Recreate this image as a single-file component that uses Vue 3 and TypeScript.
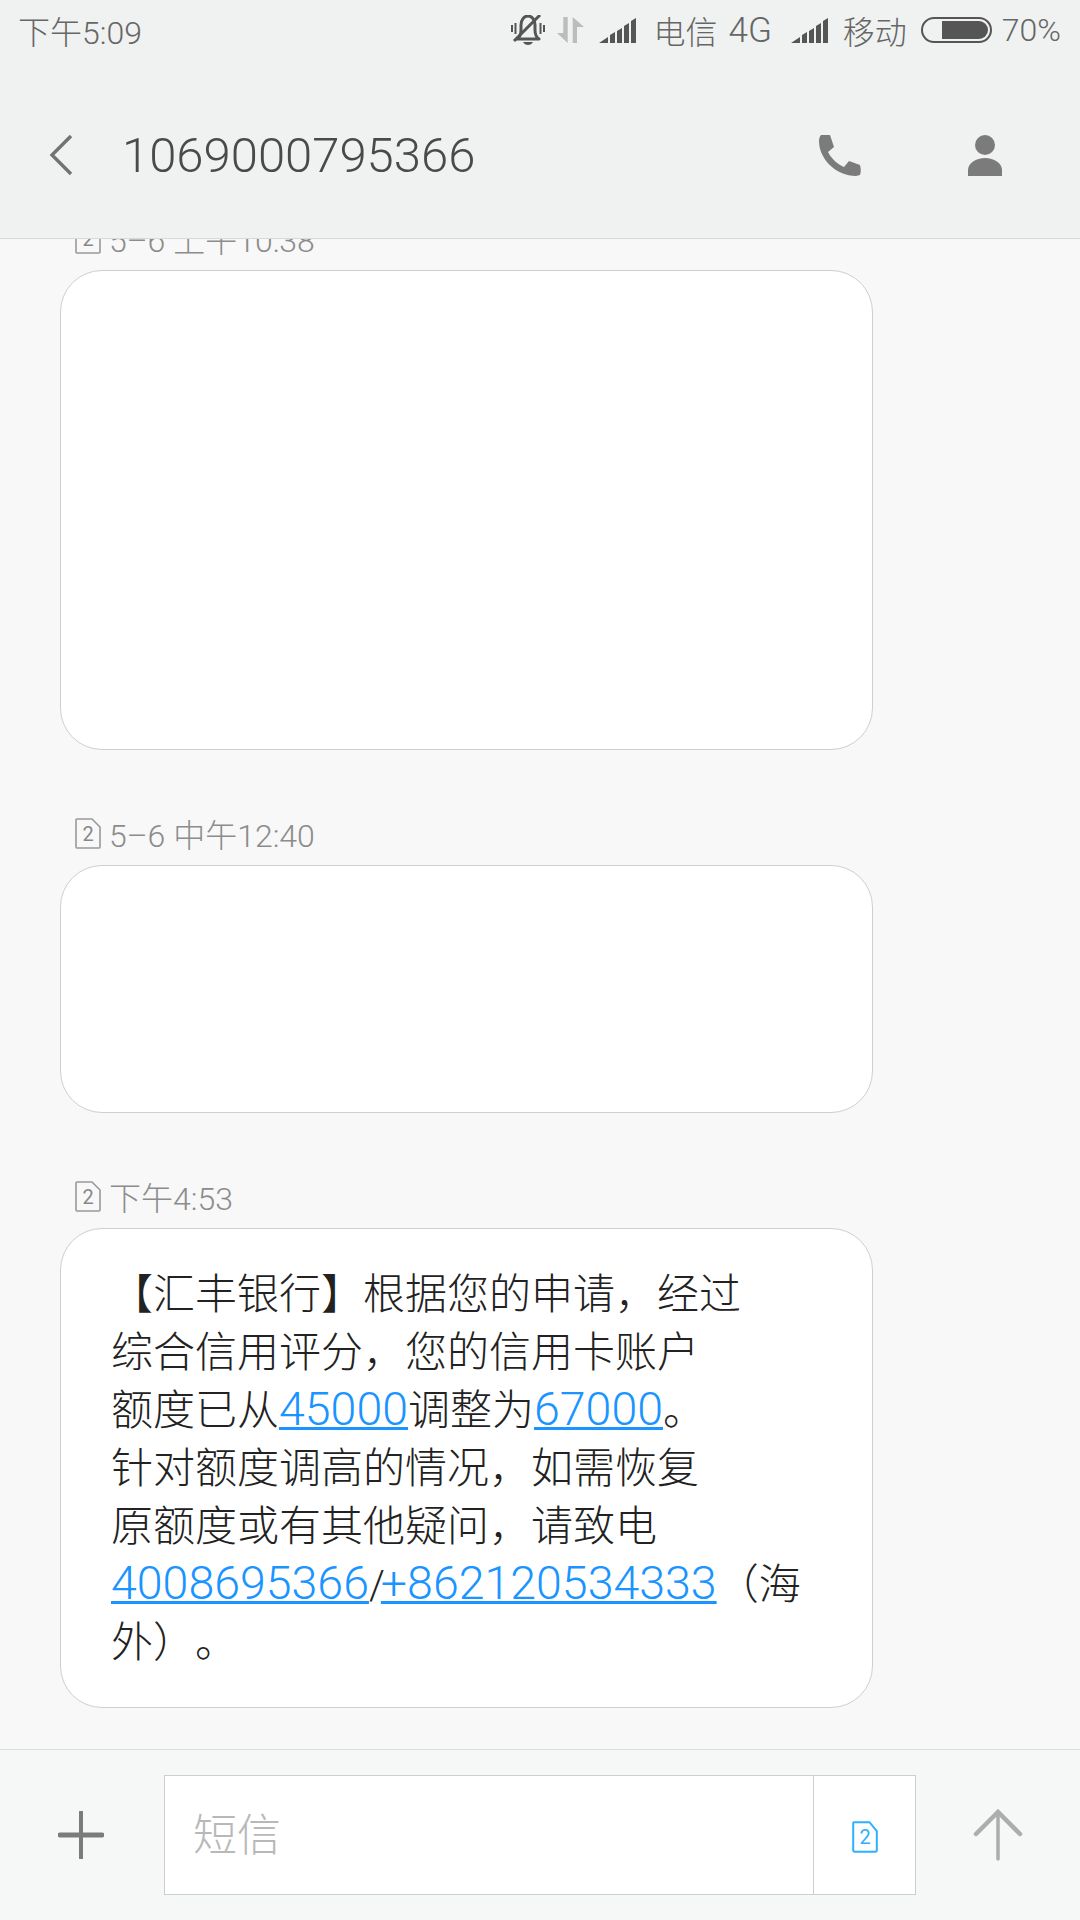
<template>
  <div class="screen">
    <header class="top">
      <div class="status">
        <span class="time">下午5:09</span>
        <div class="status-right">
          <svg class="ic-mute" width="34" height="31" viewBox="0 0 34 31">
            <path d="M6 24c3-2 4-5 4-9v-5c0-5 3-9 7-9s7 4 7 9v5c0 4 1 7 4 9z" fill="none" stroke="#555" stroke-width="3" stroke-linejoin="round" />
            <path d="M12 27h10c-1 2-3 3-5 3s-4-1-5-3z" fill="#555" />
            <path d="M1 10v7M4.500 8v11M29.500 8v11M33 10v7" stroke="#555" stroke-width="2" />
            <path d="M3 26 29 0" stroke="#555" stroke-width="3" />
          </svg>
          <svg class="ic-data" width="27" height="26" viewBox="0 0 27 26">
            <path d="M6.300 0h4.400v26L0 16h6.300z" fill="#bcbcbc" />
            <path d="M15.700 0 27 10h-7v16h-4.300z" fill="#bcbcbc" />
          </svg>
          <svg class="ic-sig first" width="37" height="25" viewBox="0 0 37 25">
            <path d="M0 25l9-6v6zM11 25v-8l5-3v11zM18 25V13l5-3v15zM25 25V8l5-3v20zM32 25V3l5-3v25z" fill="#555" />
          </svg>
          <span class="carrier first">电信</span>
          <span class="net">4G</span>
          <svg class="ic-sig" width="37" height="25" viewBox="0 0 37 25">
            <path d="M0 25l9-6v6zM11 25v-8l5-3v11zM18 25V13l5-3v15zM25 25V8l5-3v20zM32 25V3l5-3v25z" fill="#555" />
          </svg>
          <span class="carrier">移动</span>
          <div class="battery"><i></i></div>
          <span class="pct">70%</span>
        </div>
      </div>
      <div class="title-row">
        <svg class="back" width="24" height="42" viewBox="0 0 24 42">
          <path d="M22 2 3 21l19 19" fill="none" stroke="#737373" stroke-width="3.4" />
        </svg>
        <h1 class="title">1069000795366</h1>
        <svg class="phone" width="42" height="41" viewBox="0 0 42 41">
          <path d="M2 0h9l4 12-6 5c3 6 9 12 16 15l5-6 11 4c1 4 1 7 0 10l-4 1C17 41 0 24 0 6c0-3 1-5 2-6z" fill="#7b7b7b" />
        </svg>
        <svg class="person" width="34" height="41" viewBox="0 0 34 41">
          <circle cx="17" cy="10" r="10" fill="#7b7b7b" />
          <path d="M0 41v-6c0-7 8-12 17-12s17 5 17 12v6z" fill="#7b7b7b" />
        </svg>
      </div>
    </header>

    <main class="list">
      <section v-for="m in messages" :key="m.time" class="msg" :class="{ clipped: m.clipped }">
        <div class="stamp">
          <svg class="sim" width="26" height="31" viewBox="0 0 26 31">
            <path d="M1 2c0-.6.4-1 1-1h15l8 8v20c0 .6-.4 1-1 1H2c-.6 0-1-.4-1-1z" fill="none" stroke="#999" stroke-width="1.6" />
            <text x="13" y="23" text-anchor="middle" class="sim-num">2</text>
          </svg>
          <span>{{ m.time }}</span>
        </div>
        <div class="bubble" :style="{ height: m.height + 'px' }">
          <p v-if="m.body" class="body">
            <span class="tc">【</span>汇丰银行<span class="tc">】</span>根据您的申请，经过<br />
            综合信用评分，您的信用卡账户<br />
            额度已从<a>45000</a>调整为<a>67000</a>。<br />
            针对额度调高的情况，如需恢复<br />
            原额度或有其他疑问，请致电<br />
            <a>4008695366</a><span class="slash">/</span><a>+862120534333</a><span class="tc">（</span>海<br />
            外<span class="tc">）</span>。
          </p>
        </div>
      </section>
    </main>

    <footer class="composer">
      <svg class="plus" width="46" height="48" viewBox="0 0 46 48">
        <path d="M23 1v46" stroke="#7b7b7b" stroke-width="4" stroke-linecap="round" />
        <path d="M2 24h42" stroke="#7b7b7b" stroke-width="5" stroke-linecap="round" />
      </svg>
      <div class="input">
        <span class="hint">短信</span>
        <div class="sim-btn">
          <svg width="26" height="32" viewBox="0 0 26 32">
            <path d="M1.2 2c0-.5.3-.8.8-.8h15.500l7.300 8.800V29c0 1-.6 1.800-1.600 1.800H2.800c-1 0-1.600-.8-1.600-1.800z" fill="none" stroke="#2eb0ff" stroke-width="2" />
            <text x="13" y="23" text-anchor="middle" class="sim-num blue">2</text>
          </svg>
        </div>
      </div>
      <svg class="send" width="50" height="52" viewBox="0 0 50 52">
        <path d="M25 3v47" stroke="#adadad" stroke-width="3.500" stroke-linecap="round" />
        <path d="M3 25 25 3l22 22" fill="none" stroke="#adadad" stroke-width="4.500" stroke-linecap="round" />
      </svg>
    </footer>
  </div>
</template>

<script setup lang="ts">
interface Message {
  time: string;
  height: number;
  body?: boolean;
  clipped?: boolean;
}

const messages: Message[] = [
  { time: '5–6 上午10:38', height: 480, clipped: true },
  { time: '5–6 中午12:40', height: 248 },
  { time: '下午4:53', height: 480, body: true },
];
</script>

<style>
body {
  margin: 0;
}
</style>

<style scoped>
.screen {
  width: 1080px;
  height: 1920px;
  display: flex;
  flex-direction: column;
  overflow: hidden;
  background: #f8f8f8;
  font-family: Roboto, 'Noto Sans CJK SC', sans-serif;
  font-weight: 300;
  text-spacing-trim: space-all;
}
.top {
  height: 239px;
  flex: none;
  box-sizing: border-box;
  background: #f0f2f1;
  border-bottom: 1px solid #d9d9d9;
}
.status {
  height: 60px;
  display: flex;
  align-items: center;
  justify-content: space-between;
  padding: 0 19px 0 18px;
  font-size: 32px;
  color: #666;
}
.status-right {
  display: flex;
  align-items: center;
}
.ic-data {
  margin-left: 12px;
}
.ic-sig {
  margin-left: 19px;
}
.ic-sig.first {
  margin-left: 15px;
}
.carrier {
  margin-left: 15px;
}
.carrier.first {
  margin-left: 17px;
}
.net {
  margin-left: 11px;
  font-size: 35px;
}
.battery {
  width: 71px;
  height: 26px;
  box-sizing: border-box;
  margin: 0 10px 0 14px;
  border: 2px solid #555;
  border-radius: 13px;
  padding: 2px;
  display: flex;
  justify-content: flex-end;
}
.battery i {
  width: 46px;
  background: #555;
  border-radius: 0 9px 9px 0;
}
.title-row {
  height: 178px;
  display: flex;
  align-items: center;
  padding-top: 12px;
  box-sizing: border-box;
}
.back {
  margin-left: 49px;
}
.title {
  margin: 0 0 0 49px;
  flex: 1;
  font-size: 49px;
  font-weight: 300;
  color: #4a4a4a;
}
.phone {
  margin-right: 107px;
}
.person {
  margin-right: 78px;
}
.list {
  flex: 1;
  min-height: 0;
  overflow: hidden;
  padding: 0 207px 0 60px;
}
.msg {
  margin-top: 53px;
}
.msg.clipped {
  margin-top: -31px;
}
.stamp {
  height: 62px;
  box-sizing: border-box;
  display: flex;
  align-items: center;
  padding: 0 0 2px 15px;
  font-size: 32px;
  color: #8c8c8c;
}
.stamp span {
  margin-left: 8px;
}
.sim-num {
  font: 400 20px Roboto, sans-serif;
  fill: #888;
}
.sim-num.blue {
  fill: #2eb0ff;
}
.bubble {
  box-sizing: border-box;
  background: #fff;
  border: 1px solid #cfcfcf;
  border-radius: 42px;
}
.body {
  margin: 0;
  padding: 37px 0 0 50px;
  font-size: 42px;
  line-height: 58px;
  color: #222;
  white-space: nowrap;
}
.body a {
  color: #1a94ff;
  text-decoration: underline;
  text-decoration-thickness: 3px;
  text-underline-offset: 2px;
  font-size: 46.5px;
  line-height: 1;
}
.tc {
  font-family: 'Noto Sans CJK TC', sans-serif;
  line-height: 1;
}
.slash {
  font-size: 40px;
  letter-spacing: -4px;
  line-height: 1;
}
.composer {
  height: 171px;
  flex: none;
  box-sizing: border-box;
  background: #f6f8f7;
  border-top: 1px solid #dcdcdc;
  display: flex;
  align-items: center;
  padding-bottom: 1px;
}
.plus {
  margin-left: 58px;
}
.input {
  width: 752px;
  height: 120px;
  margin-left: 60px;
  box-sizing: border-box;
  background: #fff;
  border: 1px solid #cfcfcf;
  display: flex;
  align-items: center;
  justify-content: space-between;
}
.hint {
  margin: 0 0 6px 28px;
  font-size: 44px;
  color: #b8b8b8;
}
.sim-btn {
  width: 102px;
  height: 100%;
  box-sizing: border-box;
  border-left: 1px solid #cfcfcf;
  display: flex;
  align-items: center;
  justify-content: center;
  padding-top: 4px;
}
.send {
  margin-left: 57px;
}
</style>
